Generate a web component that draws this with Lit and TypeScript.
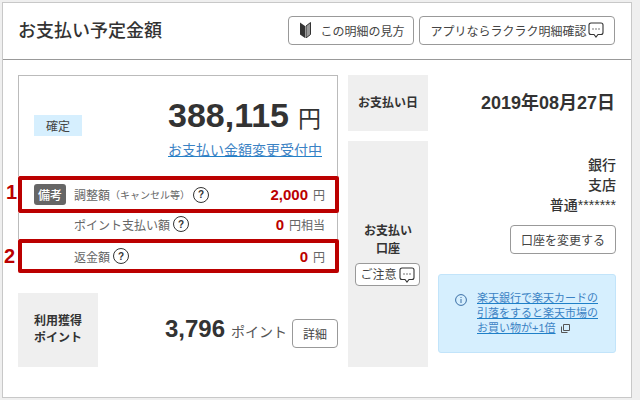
import { LitElement, html, css } from "lit";
import { customElement } from "lit/decorators.js";

const bubble = () => html`<svg class="bubble" width="16" height="16" viewBox="0 0 16 16" fill="none" stroke="#333" stroke-width="1.1"><path d="M3 1h10a2 2 0 0 1 2 2v7.500a2 2 0 0 1-2 2h-3l-2 2.500-2-2.500H3a2 2 0 0 1-2-2V3a2 2 0 0 1 2-2z" fill="#fff"/><g fill="#444" stroke="none"><circle cx="5" cy="7" r=".7"/><circle cx="8" cy="7" r=".7"/><circle cx="11" cy="7" r=".7"/></g></svg>`;
const help = html`<span class="help">?</span>`;

@customElement("app-root")
export class AppRoot extends LitElement {
  static styles = css`
    :host {
      display: block;
      width: 640px;
      height: 400px;
      overflow: hidden;
      box-sizing: border-box;
      padding: 2px 8px 0 2px;
      background: #efefef;
      font-family: "Liberation Sans", "Noto Sans CJK JP", sans-serif;
      color: #333;
    }
    .card {
      box-sizing: border-box;
      width: 630px;
      height: 396px;
      background: #fff;
      border: 1px solid #c8c8c8;
      position: relative;
    }
    .head {
      box-sizing: border-box;
      height: 57px;
      border-bottom: 1px solid #999;
      display: flex;
      align-items: center;
      padding: 0 16px 2px 15px;
      gap: 5px;
    }
    h1 {
      margin: 0 auto 0 0;
      font-size: 18px;
      font-weight: 500;
      line-height: 24px;
      position: relative;
      top: 1px;
    }
    .btn {
      box-sizing: border-box;
      display: inline-flex;
      align-items: center;
      justify-content: center;
      border: 1px solid #999;
      border-radius: 4px;
      background: #fff;
      font-size: 12px;
      color: #444;
      white-space: nowrap;
    }
    .head .btn { height: 29px; }
    .guide { width: 126px; gap: 9px; padding-left: 3px; }
    .app { width: 196px; gap: 1px; }
    .body {
      display: grid;
      grid-template-columns: 320px 90px 188px;
      padding: 15px 0 0 15px;
    }
    .left { width: 320px; }
    .box {
      box-sizing: border-box;
      height: 101px;
      border: 1px solid #bbb;
      border-bottom: 0;
      width: 320px;
      display: grid;
      grid-template-columns: 64px 1fr;
      padding: 0 16px 0 15px;
      align-items: start;
    }
    .status {
      margin-top: 39px;
      width: 48px;
      height: 21px;
      background: #d6effe;
      font-size: 12px;
      color: #444;
      display: flex;
      align-items: center;
      justify-content: center;
    }
    .amount { text-align: right; padding-top: 19px; }
    .big { font-size: 34px; font-weight: 700; line-height: 40px; white-space: nowrap; }
    .yen-l { font-size: 23px; font-weight: 400; margin-left: 9px; }
    .change {
      display: block;
      font-size: 14px;
      line-height: 18px;
      color: #3b82c4;
      text-decoration: underline;
      text-decoration-color: #1f80c8;
      margin: 2px -1px 0 0;
      white-space: nowrap;
    }
    .rows { width: 321px; }
    .row {
      box-sizing: border-box;
      display: flex;
      align-items: center;
      font-size: 12px;
      color: #666;
      width: 321px;
    }
    .row.red { border: 4px solid #bb0000; border-radius: 2px; padding-right: 10px; }
    .r1 { height: 37px; padding-left: 12px; }
    .r2 {
      height: 26px;
      padding: 0 12px 4px 55px;
      width: 320px;
      border-left: 1px solid #bbb;
      border-right: 1px solid #bbb;
    }
    .r3 { height: 34px; padding-left: 52px; }
    .tag {
      width: 32px;
      height: 21px;
      border-radius: 3px;
      background: #666;
      color: #fff;
      font-size: 12px;
      font-weight: 500;
      display: flex;
      align-items: center;
      justify-content: center;
      margin-right: 8px;
    }
    .small { font-size: 10px; }
    .help {
      box-sizing: border-box;
      width: 16px;
      height: 16px;
      border: 1.5px solid #333;
      border-radius: 50%;
      color: #333;
      font-size: 10px;
      font-weight: 700;
      display: inline-flex;
      align-items: center;
      justify-content: center;
      margin-left: 3px;
    }
    .val { margin-left: auto; display: flex; align-items: baseline; }
    .num { color: #bb0000; font-size: 15px; font-weight: 700; margin-right: 5px; }
    .tab {
      background: #efefef;
      color: #333;
      font-size: 12px;
      font-weight: 700;
      line-height: 17px;
      text-align: center;
      display: flex;
      flex-direction: column;
      align-items: center;
      justify-content: center;
    }
    .point {
      margin-top: 20px;
      display: flex;
      align-items: center;
      height: 74px;
      width: 320px;
    }
    .point .tab { width: 80px; height: 74px; }
    .pnum { font-size: 24px; font-weight: 700; margin-left: auto; margin-bottom: 3px; }
    .punit { font-size: 14px; color: #555; margin: 2px 5px 0 6px; }
    .detail { width: 46px; height: 29px; margin-top: 7px; }
    .mid { display: flex; flex-direction: column; margin-left: 10px; width: 80px; gap: 10px; }
    .mid .tab:first-child { height: 56px; }
    .acct { height: 226px; box-sizing: border-box; justify-content: flex-start; padding-top: 81px; line-height: 18px; }
    .notice { width: 65px; height: 23px; font-size: 12px; margin: 5px 1px 0 0; gap: 2px; font-weight: 400; }
    .right { margin-left: 10px; width: 178px; display: flex; flex-direction: column; align-items: flex-end; }
    .date { font-size: 18px; font-weight: 700; line-height: 24px; margin-top: 16px; margin-right: 1px; white-space: nowrap; }
    .bank { font-size: 14px; font-weight: 500; line-height: 20px; text-align: right; margin-top: 40px; }
    .change-acct { width: 106px; height: 29px; margin-top: 10px; }
    .promo {
      box-sizing: border-box;
      width: 178px;
      height: 79px;
      margin-top: 20px;
      background: #d6effe;
      border: 1px solid #c2e4fa;
      border-radius: 3px;
      padding: 16px 8px 0 16px;
      display: flex;
      gap: 10px;
      font-size: 11px;
      line-height: 15px;
    }
    .promo svg.info { flex: none; margin-top: 3px; }
    .promo .txt { white-space: nowrap; }
    .promo a { color: #3b82c4; text-decoration: underline; text-decoration-color: #1f80c8; }
    .ext { margin-left: 5px; vertical-align: -1px; }
    .mark {
      position: absolute;
      color: #bb0000;
      font-size: 20px;
      font-weight: 700;
      line-height: 20px;
    }
    .m1 { left: 3px; top: 179px; }
    .m2 { left: 1px; top: 243px; }
  `;

  render() {
    return html`<div class="card">
      <div class="head">
        <h1>お支払い予定金額</h1>
        <span class="btn guide"><svg width="11" height="16" viewBox="0 0 11 16"><path d="M0 .5l5 3.500v12L0 12.500z" fill="#333"/><path d="M6 4l4.500-3.500V12.500L6 16z" fill="#999" stroke="#333" stroke-width="1"/></svg>この明細の見方</span>
        <span class="btn app">アプリならラクラク明細確認${bubble()}</span>
      </div>
      <div class="body">
        <div class="left">
          <div class="box">
            <div class="status">確定</div>
            <div class="amount">
              <div class="big">388,115<span class="yen-l">円</span></div>
              <a class="change">お支払い金額変更受付中</a>
            </div>
          </div>
          <div class="rows">
            <div class="row red r1"><span class="tag">備考</span>調整額<span class="small">（キャンセル等）</span>${help}<span class="val"><span class="num">2,000</span>円</span></div>
            <div class="row r2">ポイント支払い額${help}<span class="val"><span class="num">0</span>円相当</span></div>
            <div class="row red r3">返金額${help}<span class="val"><span class="num">0</span>円</span></div>
          </div>
          <div class="point">
            <div class="tab">利用獲得<br />ポイント</div>
            <span class="pnum">3,796</span><span class="punit">ポイント</span>
            <span class="btn detail">詳細</span>
          </div>
        </div>
        <div class="mid">
          <div class="tab">お支払い日</div>
          <div class="tab acct">お支払い<br />口座<span class="btn notice">ご注意${bubble()}</span></div>
        </div>
        <div class="right">
          <div class="date">2019年08月27日</div>
          <div class="bank">銀行<br />支店<br />普通*******</div>
          <span class="btn change-acct">口座を変更する</span>
          <div class="promo">
            <svg class="info" width="12" height="12" viewBox="0 0 12 12" fill="none" stroke="#3a6ea5"><circle cx="6" cy="6" r="5.400"/><path d="M6 5v4M6 3v1"/></svg>
            <div class="txt"><a>楽天銀行で楽天カードの</a><br /><a>引落をすると楽天市場の</a><br /><a>お買い物が+1倍</a><svg class="ext" width="9" height="9" viewBox="0 0 9 9" fill="none" stroke="#555"><path d="M2.500.5h6v6h-6zM.5 2.500v6h6"/></svg></div>
          </div>
        </div>
      </div>
      <span class="mark m1">1</span>
      <span class="mark m2">2</span>
    </div>`;
  }
}
